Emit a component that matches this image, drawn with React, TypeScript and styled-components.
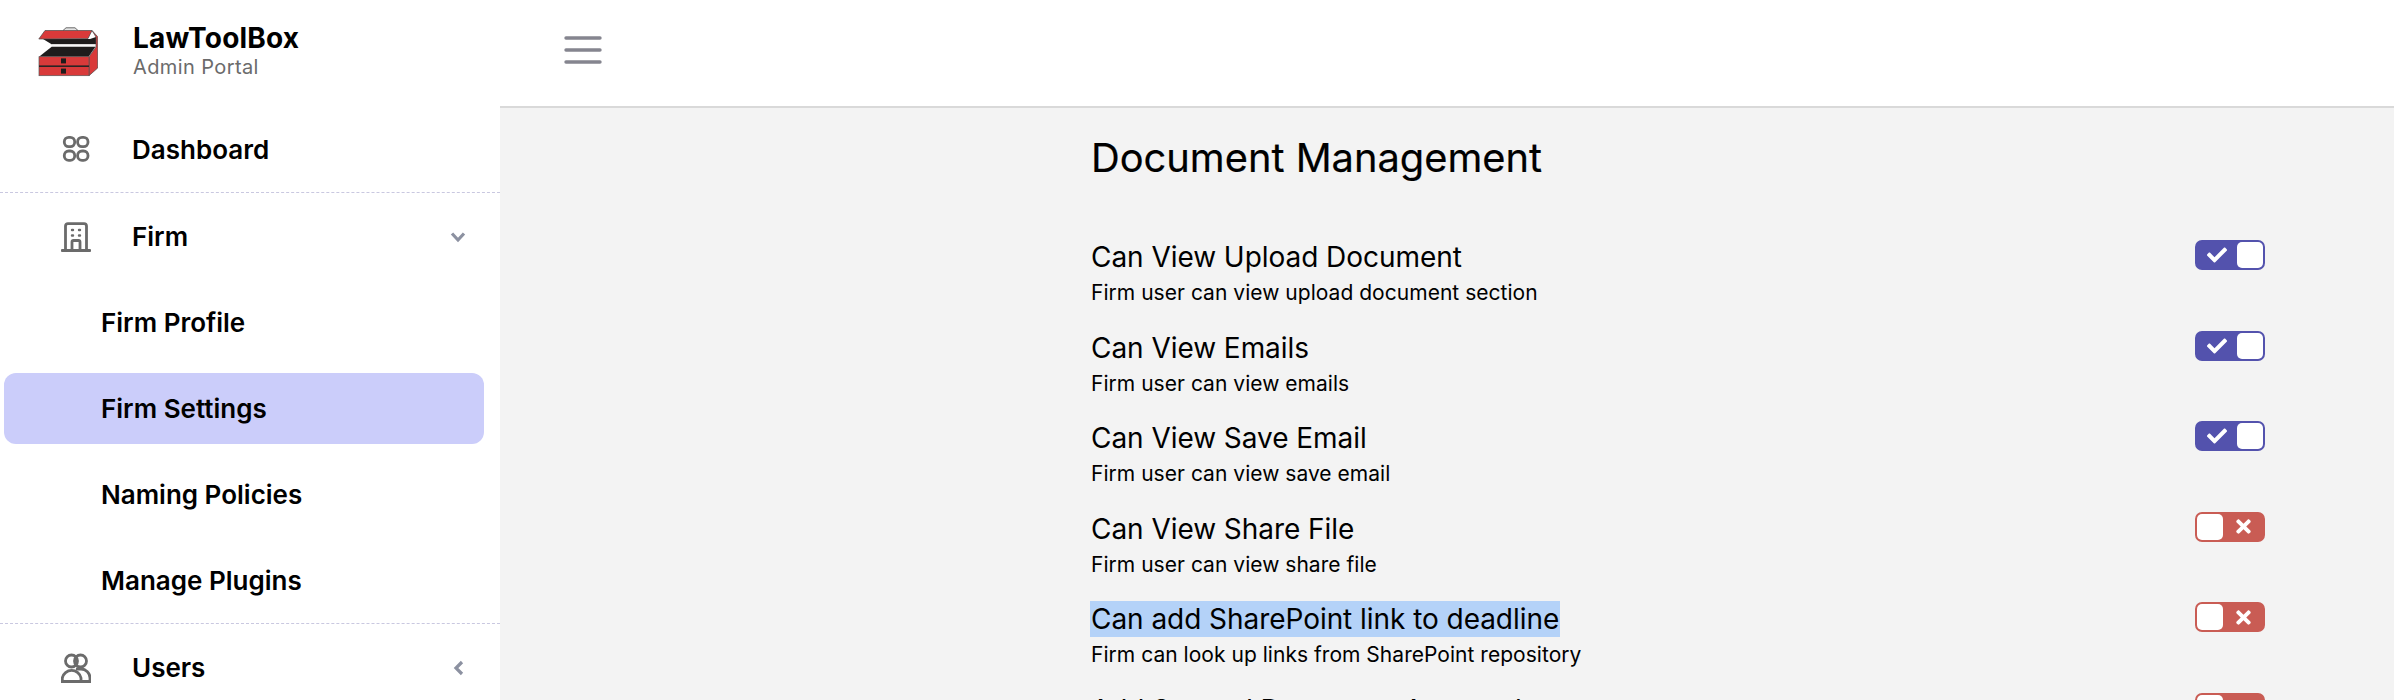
import React from "react";
import styled, { createGlobalStyle } from "styled-components";
import { FaCheck, FaTimes } from "react-icons/fa";

const Global = createGlobalStyle`
  html, body { margin: 0; padding: 0; height: 700px; overflow: hidden; background: #f3f3f3; }
  body { font-family: Inter, "Noto Sans", "Liberation Sans", sans-serif; color: #000; }
  #root { height: 700px; overflow: hidden; }
`;

const Shell = styled.div`
  display: grid;
  grid-template-columns: 500px 1fr;
  height: 700px;
  overflow: hidden;
`;
const Sidebar = styled.aside`
  background: #fff;
  display: flex;
  flex-direction: column;
  height: 700px;
  overflow: hidden;
`;
const Brand = styled.div`
  display: flex;
  align-items: center;
  flex: none;
  height: 106px;
  padding: 0 0 0 38px;
  box-sizing: border-box;
`;
const LogoWrap = styled.span`
  display: flex;
  margin-top: -2px;
`;
const BrandText = styled.div`
  margin-left: 35px;
  margin-top: -7px;
  display: flex;
  flex-direction: column;
`;
const BrandName = styled.div`
  font-size: 28px;
  line-height: 34px;
  font-weight: 700;
  letter-spacing: 0.2px;
`;
const BrandSub = styled.div`
  font-size: 20px;
  line-height: 24px;
  color: #6b6b6b;
  letter-spacing: 0.4px;
`;
const NavRow = styled.div<{ $h: number; $divider?: boolean }>`
  display: flex;
  align-items: center;
  height: ${(p) => p.$h}px;
  flex: none;
  box-sizing: border-box;
  padding: 0 34px 0 60px;
  border-bottom: ${(p) => (p.$divider ? "1px dashed #c9c8e0" : "none")};
`;
const NavIcon = styled.span`
  display: flex;
  width: 32px;
  justify-content: center;
  margin-right: 40px;
`;
const NavLabel = styled.span`
  flex: 1;
  font-size: 26px;
  font-weight: 600;
`;
const SubList = styled.div`
  display: flex;
  flex-direction: column;
  gap: 15.5px;
  padding: 7px 16px 7px 4px;
  border-bottom: 1px dashed #c9c8e0;
  flex: none;
`;
const SubItem = styled.div<{ $active?: boolean }>`
  height: 70.5px;
  display: flex;
  align-items: center;
  padding-left: 97px;
  font-size: 26px;
  font-weight: 600;
  border-radius: 12px;
  background: ${(p) => (p.$active ? "#cbcdfa" : "transparent")};
`;
const MainCol = styled.main`
  display: flex;
  flex-direction: column;
  height: 700px;
  min-width: 0;
`;
const TopBar = styled.header`
  height: 108px;
  flex: none;
  box-sizing: border-box;
  background: #fff;
  border-bottom: 2px solid #d9d9d9;
  display: flex;
  align-items: center;
  padding-left: 64px;
  padding-bottom: 6px;
`;
const Content = styled.section`
  padding: 26px 129px 0 591px;
`;
const Heading = styled.h1`
  margin: 0 0 58px;
  font-size: 39.8px;
  line-height: 48px;
  font-weight: 400;
  -webkit-text-stroke: 0.2px #000;
`;
const Row = styled.div`
  display: flex;
  justify-content: space-between;
  align-items: flex-start;
  height: 90.5px;
`;
const RowTitle = styled.div`
  font-size: 28px;
  line-height: 34px;
  letter-spacing: -0.05px;
`;
const Selected = styled.span`
  background: #b4d2f8;
  padding: 1px 1px 1px 1px;
  margin-left: -1px;
`;
const RowSub = styled.div`
  font-size: 21px;
  line-height: 26px;
  margin-top: 6px;
  letter-spacing: 0.03px;
`;
const Track = styled.div<{ $on: boolean }>`
  width: 70px;
  height: 30px;
  flex: none;
  box-sizing: border-box;
  border-radius: 7px;
  border: 2px solid ${(p) => (p.$on ? "#5352ad" : "#c95c54")};
  background: ${(p) => (p.$on ? "#5352ad" : "#c95c54")};
  display: flex;
  flex-direction: ${(p) => (p.$on ? "row" : "row-reverse")};
  align-items: center;
  color: #fff;
`;
const IconSlot = styled.span`
  flex: 1;
  display: flex;
  justify-content: center;
`;
const Thumb = styled.span`
  width: 26px;
  height: 26px;
  background: #fff;
  border-radius: 5px;
`;

const Logo = () => (
  <svg width="60" height="50" viewBox="0 0 60 50">
    <path d="M25 3.5 L28 0.8 H37 L40 3.5" fill="#e4e4e4" stroke="#6a6a6a" strokeWidth="1" />
    <path d="M5 12 H52 L58 10 V17.5 H14 Z" fill="#1e1c1c" />
    <path d="M0.8 12 L7 3.5 H54 L50 11.5 Z" fill="#d93a3a" stroke="#4a4a4a" strokeWidth="0.7" />
    <path d="M13.7 17.3 H58 V19.8 H13.7 Z" fill="#f6f6f6" />
    <path d="M13.7 19.8 H57.5 L50.5 29.7 H1 Z" fill="#1e1c1c" />
    <path d="M54 3.5 L59.7 9.7 V41 L51 48.7 V29.7 L58 20 V10 Z" fill="#d93a3a" stroke="#4a4a4a" strokeWidth="0.7" />
    <rect x="1" y="29.7" width="50" height="19" fill="#d93a3a" stroke="#5a5a5a" strokeWidth="0.7" />
    <rect x="1" y="38.4" width="50" height="1.6" fill="#2a2424" />
    <rect x="23" y="31.4" width="5" height="5" fill="#1e1c1c" />
    <rect x="23" y="41.6" width="5" height="5" fill="#1e1c1c" />
  </svg>
);

const stroke = { fill: "none", stroke: "#6b6b6b", strokeWidth: 2.8 } as const;

const DashIcon = () => (
  <svg width="28" height="28" viewBox="0 0 28 28" {...stroke}>
    <rect x="2.3" y="2.3" width="10.4" height="9.4" rx="4.4" />
    <rect x="15.6" y="2.3" width="10.4" height="9.4" rx="4.4" />
    <rect x="2.3" y="16" width="10.4" height="9.4" rx="4.4" />
    <rect x="15.6" y="16" width="10.4" height="9.4" rx="4.4" />
  </svg>
);
const BuildingIcon = () => (
  <svg width="30" height="30" viewBox="0 0 30 30" {...stroke} strokeLinecap="round">
    <path d="M1 28.5 H29" />
    <path d="M4.5 28 V4 Q4.5 1.6 7 1.6 H23 Q25.5 1.6 25.5 4 V28" />
    <path d="M11 28 V20 Q11 18.5 12.5 18.5 H17.5 Q19 18.5 19 20 V28" />
    <path d="M11 8 H12 M18 8 H19 M11 13.5 H12 M18 13.5 H19" strokeWidth="2.4" />
  </svg>
);
const UsersIcon = () => (
  <svg width="30" height="30" viewBox="0 0 30 30" {...stroke}>
    <circle cx="10.5" cy="8" r="6" />
    <circle cx="19.5" cy="8" r="6" />
    <path d="M1.3 28.5 V25 A9.5 9.2 0 0 1 20 25 V28.5 Z" />
    <path d="M15 16 H20 A9 9 0 0 1 29 25 V28.5 H20" />
  </svg>
);
const ChevronDown = () => (
  <svg width="16" height="12" viewBox="0 0 16 12" fill="none" stroke="#8c91a1" strokeWidth="3.2">
    <path d="M2 2.5 L8 9 L14 2.5" />
  </svg>
);
const ChevronLeft = () => (
  <svg width="16" height="16" viewBox="0 0 16 16" fill="none" stroke="#8c91a1" strokeWidth="3.2">
    <path d="M12 2 L6 8 L12 14" />
  </svg>
);
const Menu = () => (
  <svg width="38" height="30" viewBox="0 0 38 30" fill="none" stroke="#85858f" strokeWidth="3.4" strokeLinecap="round">
    <path d="M2 3 H36 M2 15 H36 M2 27 H36" />
  </svg>
);

const Toggle = ({ on }: { on: boolean }) => (
  <Track $on={on}>
    <IconSlot>{on ? <FaCheck size={20} /> : <FaTimes size={21} />}</IconSlot>
    <Thumb />
  </Track>
);

const rows: { title: string; sub: string; on: boolean; selected?: boolean }[] = [
  { title: "Can View Upload Document", sub: "Firm user can view upload document section", on: true },
  { title: "Can View Emails", sub: "Firm user can view emails", on: true },
  { title: "Can View Save Email", sub: "Firm user can view save email", on: true },
  { title: "Can View Share File", sub: "Firm user can view share file", on: false },
  { title: "Can add SharePoint link to deadline", sub: "Firm can look up links from SharePoint repository", on: false, selected: true },
  { title: "Add Second Document Approval", sub: "", on: false },
];

export default function App() {
  return (
    <>
      <Global />
      <Shell>
        <Sidebar>
          <Brand>
            <LogoWrap><Logo /></LogoWrap>
            <BrandText>
              <BrandName>LawToolBox</BrandName>
              <BrandSub>Admin Portal</BrandSub>
            </BrandText>
          </Brand>
          <NavRow $h={87} $divider>
            <NavIcon><DashIcon /></NavIcon>
            <NavLabel>Dashboard</NavLabel>
          </NavRow>
          <NavRow $h={87}>
            <NavIcon><BuildingIcon /></NavIcon>
            <NavLabel>Firm</NavLabel>
            <ChevronDown />
          </NavRow>
          <SubList>
            <SubItem>Firm Profile</SubItem>
            <SubItem $active>Firm Settings</SubItem>
            <SubItem>Naming Policies</SubItem>
            <SubItem>Manage Plugins</SubItem>
          </SubList>
          <NavRow $h={88}>
            <NavIcon><UsersIcon /></NavIcon>
            <NavLabel>Users</NavLabel>
            <ChevronLeft />
          </NavRow>
        </Sidebar>
        <MainCol>
          <TopBar><Menu /></TopBar>
          <Content>
            <Heading>Document Management</Heading>
            {rows.map((r) => (
              <Row key={r.title}>
                <div>
                  <RowTitle>{r.selected ? <Selected>{r.title}</Selected> : r.title}</RowTitle>
                  <RowSub>{r.sub}</RowSub>
                </div>
                <Toggle on={r.on} />
              </Row>
            ))}
          </Content>
        </MainCol>
      </Shell>
    </>
  );
}
